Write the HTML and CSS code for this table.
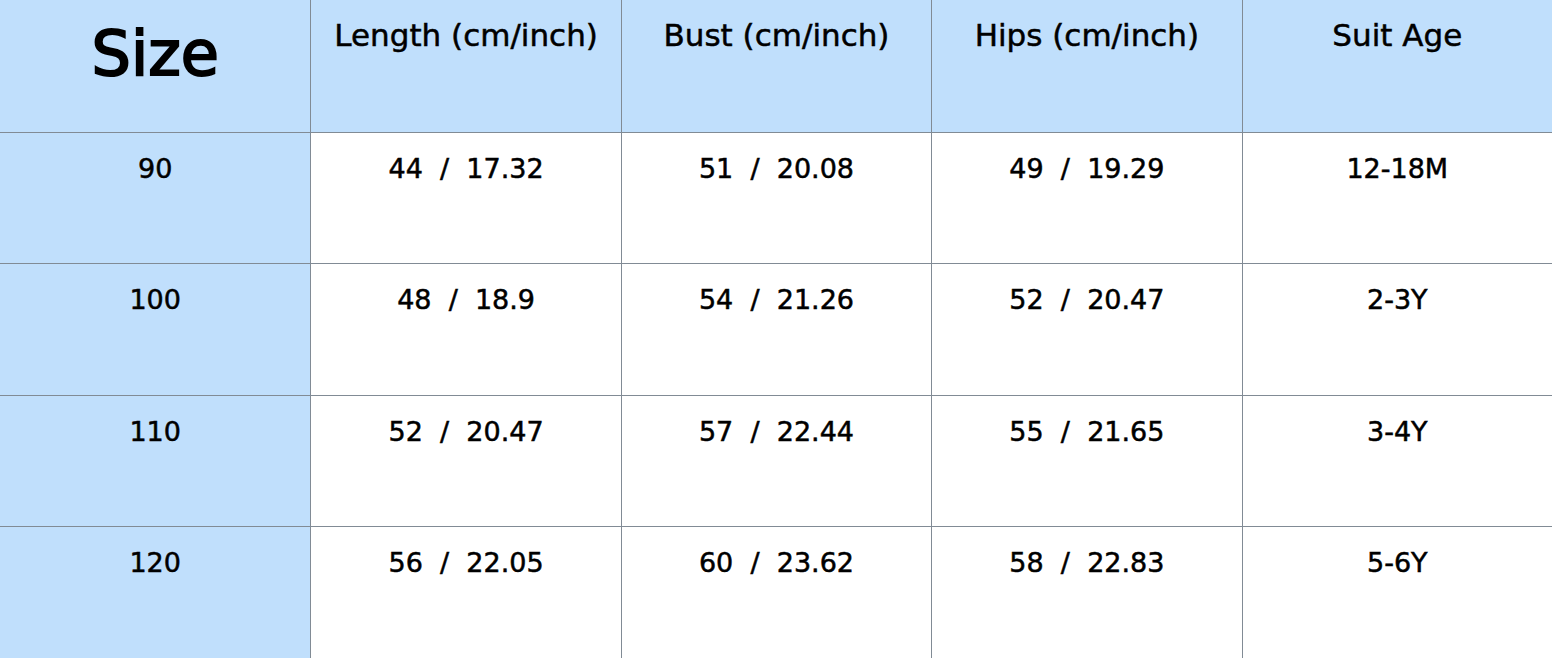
FILE: index.html
```html
<!DOCTYPE html>
<html lang="en">
<head>
<meta charset="utf-8">
<title>Size Chart</title>
<link rel="stylesheet" href="styles.css">
</head>
<body>
<div class="chart">
  <div class="cell head size-label"><span class="size-big">Size</span></div>
  <div class="cell head">Length (cm/inch)</div>
  <div class="cell head">Bust (cm/inch)</div>
  <div class="cell head">Hips (cm/inch)</div>
  <div class="cell head">Suit Age</div>

  <div class="cell side">90</div>
  <div class="cell">44 &nbsp;/ &nbsp;17.32</div>
  <div class="cell">51 &nbsp;/ &nbsp;20.08</div>
  <div class="cell">49 &nbsp;/ &nbsp;19.29</div>
  <div class="cell">12-18M</div>

  <div class="cell side">100</div>
  <div class="cell">48 &nbsp;/ &nbsp;18.9</div>
  <div class="cell">54 &nbsp;/ &nbsp;21.26</div>
  <div class="cell">52 &nbsp;/ &nbsp;20.47</div>
  <div class="cell">2-3Y</div>

  <div class="cell side">110</div>
  <div class="cell">52 &nbsp;/ &nbsp;20.47</div>
  <div class="cell">57 &nbsp;/ &nbsp;22.44</div>
  <div class="cell">55 &nbsp;/ &nbsp;21.65</div>
  <div class="cell">3-4Y</div>

  <div class="cell side">120</div>
  <div class="cell">56 &nbsp;/ &nbsp;22.05</div>
  <div class="cell">60 &nbsp;/ &nbsp;23.62</div>
  <div class="cell">58 &nbsp;/ &nbsp;22.83</div>
  <div class="cell">5-6Y</div>
</div>
</body>
</html>
```

FILE: styles.css
```css
html, body {
  margin: 0;
  padding: 0;
  background: #ffffff;
}

body {
  font-family: "Comic Sans MS", "DejaVu Sans", sans-serif;
  color: #000000;
}

.chart {
  width: 1552px;
  height: 658px;
  display: grid;
  grid-template-columns: repeat(5, 1fr);
  grid-template-rows: repeat(5, 1fr);
  overflow: hidden;
}

.cell {
  box-sizing: border-box;
  display: flex;
  justify-content: center;
  align-items: flex-start;
  padding-top: 18px;
  font-size: 27px;
  line-height: 36px;
  text-align: center;
  white-space: nowrap;
  -webkit-text-stroke: 0.5px #000000;
  border-left: 1px solid #818b95;
  border-top: 1px solid #818b95;
  background: #ffffff;
}

.cell:nth-child(5n+1) {
  border-left: none;
}

.cell:nth-child(-n+5) {
  border-top: none;
}

.head,
.side {
  background: #c0dffc;
}

.head {
  font-size: 31px;
  padding-top: 17px;
}

.size-label {
  padding-top: 20px;
}

.size-big {
  font-size: 62px;
  line-height: 68px;
  -webkit-text-stroke: 2px #000000;
}
```
